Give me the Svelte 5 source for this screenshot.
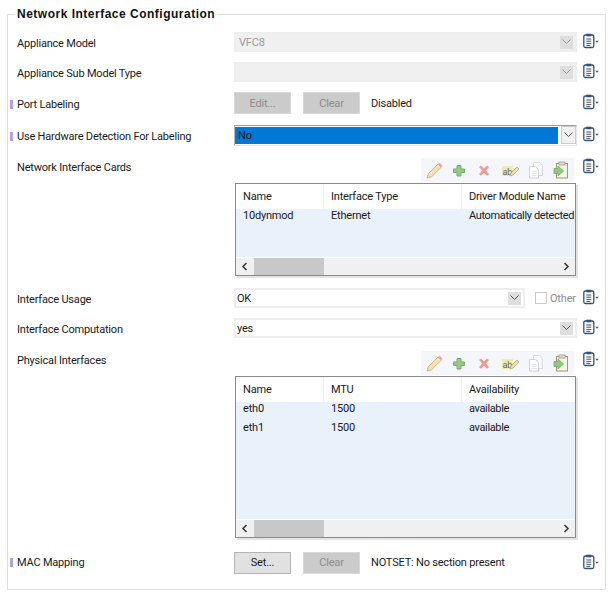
<script lang="ts">
	const nicColumns = [
		{ name: 'Name', width: 88 },
		{ name: 'Interface Type', width: 138 },
		{ name: 'Driver Module Name', width: 113 }
	];
	const nicRows = [['10dynmod', 'Ethernet', 'Automatically detected']];
	const physColumns = [
		{ name: 'Name', width: 88 },
		{ name: 'MTU', width: 138 },
		{ name: 'Availability', width: 113 }
	];
	const physRows = [
		['eth0', '1500', 'available'],
		['eth1', '1500', 'available']
	];
</script>

{#snippet clip()}
	<svg class="clip" width="16" height="16" viewBox="0 0 16 16" aria-hidden="true">
		<rect x="0.8" y="2" width="10" height="12.500" rx="1.500" fill="#fff" stroke="#34507e" stroke-width="1.300" />
		<rect x="3.300" y="0.700" width="5" height="2.600" fill="#34507e" />
		<path d="M3.300 6h5M3.300 8.200h5M3.300 10.400h5M3.300 12.400h4" stroke="#4a4f5a" stroke-width="1" />
		<path d="M12.300 7.800h3.400l-1.700 2z" fill="#34507e" />
	</svg>
{/snippet}

{#snippet toolbar()}
	<div class="toolbar">
		<svg width="153" height="24" viewBox="0 0 153 24" aria-hidden="true">
			<!-- pencil -->
			<path d="M7.500 15.500L17 6l3.200 3.200L10.500 18.800l-4.500 1.200z" fill="#f5e3ae" stroke="#cdb987" stroke-width="1" />
			<path d="M17 6l1.400-1.500 3.200 3.200-1.400 1.500z" fill="#e9a8a2" />
			<!-- plus -->
			<path d="M36 7.500h4V11h3.500v3.500H40V18h-4v-3.500h-3.500V11H36z" fill="#93cb86" stroke="#74ab6a" stroke-width="1" />
			<!-- delete -->
			<path d="M58 9l2-1.500 3 3 3-3 2 1.500-3 3.500 3 3.700-2 1.500-3-3-3 3-2-1.500 3-3.700z" fill="#f19a95" />
			<!-- rename -->
			<rect x="81" y="8" width="11" height="10" fill="#efeab0" />
			<text x="81.500" y="16.500" class="ab">ab</text>
			<path d="M90 15l6-6 2 2-6 6-3 1z" fill="#ece0b8" stroke="#b3a87f" stroke-width="0.800" />
			<!-- copy -->
			<path d="M112.500 4.500h6l3 3v10h-9z" fill="#f7f8f9" stroke="#d8dbde" />
			<path d="M108.500 8.500h6l3 3v8.500h-9z" fill="#fcfcfc" stroke="#d0d3d6" />
			<path d="M110.500 13.500h5M110.500 15.500h5M110.500 17.500h5" stroke="#e2e4e6" />
			<!-- paste -->
			<rect x="135.500" y="5.500" width="11" height="14.500" fill="#f5f2ea" stroke="#a39678" />
			<rect x="138" y="4" width="6" height="3" fill="#dedad0" stroke="#a09b8e" stroke-width="0.800" />
			<path d="M133 10.500h4V8l5.500 5L137 18v-2.500h-4z" fill="#93c882" stroke="#72a865" stroke-width="0.800" />
		</svg>
	</div>
{/snippet}

{#snippet grid(columns: { name: string; width: number }[], rows: string[][], bodyHeight: number)}
	<div class="table-wrap">
		<div class="table">
			<div class="thead">
				{#each columns as col}
					<span class="th" style="width: {col.width}px">{col.name}</span>
				{/each}
			</div>
			<div class="tbody" style="height: {bodyHeight}px">
				{#each rows as row}
					<div class="tr">
						{#each row as cell, i}
							<span class="td" style="width: {columns[i].width}px">{cell}</span>
						{/each}
					</div>
				{/each}
			</div>
			<div class="hscroll">
				<svg width="18" height="17" viewBox="0 0 18 17" aria-hidden="true"><path d="M10.500 5l-3.500 3.500 3.500 3.500" fill="none" stroke="#333" stroke-width="1.500" /></svg>
				<div class="thumb"></div>
				<div class="track"></div>
				<svg width="18" height="17" viewBox="0 0 18 17" aria-hidden="true"><path d="M7.500 5l3.500 3.500-3.500 3.500" fill="none" stroke="#333" stroke-width="1.500" /></svg>
			</div>
		</div>
	</div>
{/snippet}

{#snippet chevron()}
	<svg width="9" height="6" viewBox="0 0 9 6" aria-hidden="true"><path d="M0.500 0.500l4 4 4-4" fill="none" stroke="currentColor" stroke-width="1" /></svg>
{/snippet}

<fieldset class="panel">
	<legend>Network Interface Configuration</legend>

	<div class="row first">
		<span class="label">Appliance Model</span>
		<div class="combo disabled"><span class="value">VFC8</span><span class="drop">{@render chevron()}</span></div>
		{@render clip()}
	</div>

	<div class="row first">
		<span class="label">Appliance Sub Model Type</span>
		<div class="combo disabled"><span class="value"></span><span class="drop">{@render chevron()}</span></div>
		{@render clip()}
	</div>

	<div class="row second">
		<span class="label marked">Port Labeling</span>
		<div class="buttons">
			<button class="btn" disabled>Edit...</button>
			<button class="btn" disabled>Clear</button>
			<span class="status">Disabled</span>
		</div>
		{@render clip()}
	</div>

	<div class="row second">
		<span class="label marked">Use Hardware Detection For Labeling</span>
		<div class="combo focused"><span class="value"><span class="selected">No</span></span><span class="drop">{@render chevron()}</span></div>
		{@render clip()}
	</div>

	<div class="row tall nic">
		<span class="label">Network Interface Cards</span>
		<div class="stack">
			{@render toolbar()}
			{@render grid(nicColumns, nicRows, 48)}
		</div>
		{@render clip()}
	</div>

	<div class="row first usage">
		<span class="label">Interface Usage</span>
		<div class="usage-line">
			<div class="combo"><span class="value plain">OK</span><span class="drop">{@render chevron()}</span></div>
			<span class="check"></span>
			<span class="other">Other</span>
		</div>
		{@render clip()}
	</div>

	<div class="row first">
		<span class="label">Interface Computation</span>
		<div class="combo"><span class="value plain">yes</span><span class="drop">{@render chevron()}</span></div>
		{@render clip()}
	</div>

	<div class="row tall phys">
		<span class="label">Physical Interfaces</span>
		<div class="stack">
			{@render toolbar()}
			{@render grid(physColumns, physRows, 117)}
		</div>
		{@render clip()}
	</div>

	<div class="row mac">
		<span class="label marked">MAC Mapping</span>
		<div class="buttons">
			<button class="btn active">Set...</button>
			<button class="btn" disabled>Clear</button>
			<span class="status">NOTSET: No section present</span>
		</div>
		{@render clip()}
	</div>
</fieldset>

<style>
	:global(body) {
		margin: 0;
		background: #fff;
		font-family: Roboto, 'Liberation Sans', Arial, sans-serif;
		font-size: 11px;
		letter-spacing: -0.2px;
		color: #1a1a1a;
	}

	.panel {
		box-sizing: border-box;
		width: 599px;
		height: 583px;
		margin: 7px 0 0 7px;
		padding: 5px 0 0;
		border: 1px solid #dedede;
		min-width: 0;
	}

	legend {
		margin-left: 7px;
		padding: 0 2px;
		font-family: 'Liberation Sans', Arial, sans-serif;
		font-size: 12px;
		font-weight: bold;
		letter-spacing: 0.5px;
		color: #111;
		line-height: 15px;
	}

	.row {
		display: grid;
		grid-template-columns: 226px 343px 28px;
		align-items: center;
		height: 31px;
	}

	.first {
		height: 30px;
	}

	.second {
		height: 32px;
	}

	.row :global(.clip) {
		margin-left: 6px;
		margin-top: -2px;
	}

	.label {
		position: relative;
		padding: 2px 0 0 9px;
	}

	.marked::before {
		content: '';
		position: absolute;
		left: 2px;
		top: 4px;
		width: 3px;
		height: 9px;
		background: #b8a2d6;
	}

	.mac .label {
		padding-top: 0;
	}

	.mac .marked::before {
		top: 2px;
	}

	.tall {
		align-items: start;
	}

	.tall .label {
		margin-top: 3px;
		padding-top: 0;
	}

	.tall :global(.clip) {
		margin-top: 0;
	}

	.nic {
		height: 120px;
		margin-top: 7px;
	}

	.phys {
		height: 191px;
		margin-top: 8px;
	}

	.usage {
		margin-top: 5px;
	}

	.mac {
		margin-top: 5px;
	}

	.combo {
		box-sizing: border-box;
		display: flex;
		align-items: center;
		height: 20px;
		border: 2px solid #eeeeee;
		background: #fff;
		flex: 1;
		min-width: 0;
		color: #555;
	}

	.combo.disabled {
		background: #f0f0f0;
		color: #9a9a9a;
	}

	.value {
		flex: 1;
		padding-left: 3px;
	}

	.value.plain {
		padding-left: 1px;
		color: #1a1a1a;
	}

	.drop {
		display: flex;
		align-items: center;
		justify-content: center;
		width: 13px;
		height: 13px;
		margin-right: 2px;
		background: #dedede;
	}

	.combo.focused {
		height: 21px;
		border: 1px solid #adadad;
		border-color: #9c9c9c #e6e6e6 #e6e6e6 #b5b5b5;
		background: #fff;
	}

	.combo.focused .value {
		padding: 0;
		align-self: stretch;
		display: flex;
		margin: 1px 3px 1px 0;
		background: #0078d7;
		outline: 1px dotted #a05a10;
		outline-offset: -1px;
	}

	.selected {
		padding-left: 3px;
		line-height: 17px;
		color: #111;
	}

	.combo.focused .drop {
		width: 15px;
		height: 18px;
		margin-right: 0;
		background: #f0f0f0;
		border: 1px solid #ccc;
		box-sizing: border-box;
	}

	.buttons {
		display: flex;
		align-items: center;
		gap: 12px;
	}

	.btn {
		box-sizing: border-box;
		width: 57px;
		height: 22px;
		padding: 0;
		font: inherit;
		letter-spacing: inherit;
		border: 1px solid #d9d9d9;
		background: #cbcbcb;
		color: #8d8d8d;
	}

	.btn.active {
		background: #e1e1e1;
		border-color: #b4b4b4;
		color: #1a1a1a;
	}

	.status {
		margin-left: -1px;
	}

	.stack {
		display: flex;
		flex-direction: column;
	}

	.toolbar {
		align-self: flex-end;
		margin-right: 3px;
		height: 24px;
		width: 153px;
		background: #f5f6fc;
	}

	.toolbar svg {
		display: block;
	}

	.ab {
		font-size: 9px;
		fill: #666;
	}

	.table-wrap {
		width: 341px;
		margin: 1px 0 0 1px;
		box-shadow: 2px 2px 0 #e4e4e4;
	}

	.table {
		box-sizing: border-box;
		border: 1px solid #8a8a8a;
		background: #fff;
		overflow: hidden;
	}

	.thead {
		display: flex;
		height: 25px;
		align-items: center;
		white-space: nowrap;
	}

	.th,
	.td {
		box-sizing: border-box;
		padding-left: 7px;
		white-space: nowrap;
		overflow: hidden;
	}

	.td:last-child {
		letter-spacing: -0.35px;
	}

	.th {
		line-height: 25px;
		border-right: 1px solid #eeeeee;
	}

	.th:last-child {
		border-right: 0;
	}

	.tbody {
		background: #e9f1fb;
		border-bottom: 1px solid #fff;
	}

	.tr {
		display: flex;
		height: 19px;
		line-height: 14px;
	}

	.hscroll {
		display: flex;
		height: 17px;
		background: #f0f0f0;
		align-items: stretch;
	}

	.thumb {
		width: 70px;
		background: #c8c8c8;
	}

	.track {
		flex: 1;
	}

	.usage-line {
		display: flex;
		align-items: center;
	}

	.usage-line .combo {
		flex: 0 0 291px;
	}

	.check {
		box-sizing: border-box;
		width: 12px;
		height: 12px;
		margin-left: 10px;
		border: 1px solid #c9c9c9;
		background: #fff;
	}

	.other {
		margin-left: 3px;
		color: #8d8d8d;
	}
</style>
